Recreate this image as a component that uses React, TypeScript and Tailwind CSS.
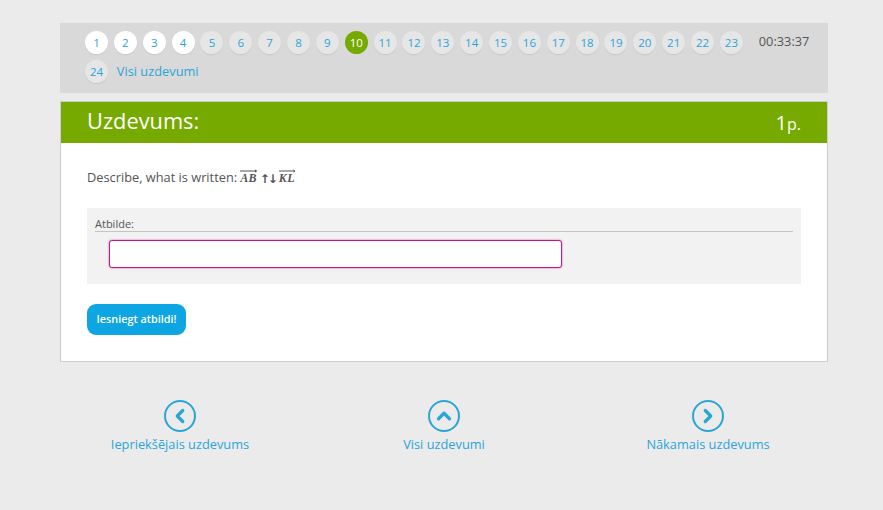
import { ChevronLeft, ChevronRight, ChevronUp } from 'lucide-react'

const numbers = Array.from({ length: 24 }, (_, i) => i + 1)

function Vec({ text }: { text: string }) {
  return (
    <span className="relative inline-block pt-[2px] font-['Liberation_Serif',serif] text-[12px] leading-[13px] font-bold italic tracking-[0.3px] text-[#555]">
      <svg className="absolute top-[-1px] left-0 h-[4px] w-full" viewBox="0 0 16 4" preserveAspectRatio="none">
        <path d="M0 2H16M14.5 1L16 2L14.5 3" fill="none" stroke="#555" strokeWidth="1" />
      </svg>
      {text}
    </span>
  )
}

function Bubble({ n }: { n: number }) {
  let tone = 'bg-[#e6e6e6] text-[#2aa5d8] shadow-[0_1px_1px_rgba(0,0,0,0.08)]'
  if (n < 5) tone = 'bg-white text-[#2aa5d8] shadow-[0_1px_1px_rgba(0,0,0,0.08)]'
  if (n === 10) tone = 'bg-[#76aa00] text-white'
  return (
    <a className={`mr-[5.87px] mb-[6px] flex h-[23px] w-[23px] shrink-0 items-center justify-center rounded-full text-[11.5px] ${tone}`}>
      {n}
    </a>
  )
}

function NavLink({ label, icon }: { label: string; icon: React.ReactNode }) {
  return (
    <a className="flex flex-col items-center text-[12.8px] leading-[18px] text-[#2aa5d8]">
      <span className="mb-[3px] flex h-[32px] w-[32px] items-center justify-center rounded-full border-2 border-[#2aa5d8]">
        {icon}
      </span>
      {label}
    </a>
  )
}

export default function App() {
  return (
    <div className="h-[510px] overflow-hidden bg-[#ebebeb] font-['Open_Sans',sans-serif]">
      <div className="ml-[60px] w-[768px] pt-[23px]">
        {/* Question numbers */}
        <div className="h-[70px] bg-[#d9d9d9] pt-[8px] pr-[17px] pl-[25px]">
          <div className="flex flex-wrap items-start">
            {numbers.slice(0, 23).map((n) => (
              <Bubble key={n} n={n} />
            ))}
            <span className="ml-[10px] text-[12.8px] leading-[20px] text-[#555]">00:33:37</span>
            <Bubble n={24} />
            <a className="ml-[3px] text-[12.8px] leading-[22px] text-[#2aa5d8]">Visi uzdevumi</a>
          </div>
        </div>

        {/* Task card */}
        <div className="mt-[8px] h-[261px] border border-[#cccccc] bg-white">
          <div className="flex h-[41px] items-center justify-between bg-[#76aa00] pr-[26px] pl-[26px] text-white">
            <h2 className="pb-[2px] text-[21.8px]">Uzdevums:</h2>
            <span className="text-[16px]">
              <span className="text-[20px]">1</span>p.
            </span>
          </div>
          <div className="px-[26px]">
            <p className="flex h-[65px] items-center gap-[3px] pt-[4px] text-[12.8px] text-[#555]">
              Describe, what is written: <Vec text="AB" />
              <span className="mt-[2px] font-['DejaVu_Sans',sans-serif] text-[12px] font-bold tracking-[-2px] text-[#555]">↑↓</span>
              <Vec text="KL" />
            </p>
            <div className="h-[76px] bg-[#f2f2f2] px-[8px] pt-[9px]">
              <div className="border-b border-[#c4c4c4] text-[11px] leading-[14px] text-[#555]">Atbilde:</div>
              <input className="mt-[8px] ml-[14px] block h-[28px] w-[453px] rounded-[3px] border border-[#c2148c] bg-white shadow-[0_0_2px_rgba(194,20,140,0.7)]" />
            </div>
            <button className="mt-[20px] h-[31px] w-[99px] rounded-[9px] bg-[#0ea5e3] text-[10.8px] font-semibold text-white">
              Iesniegt atbildi!
            </button>
          </div>
        </div>

        {/* Prev / all / next */}
        <div className="-mx-3 mt-[38px] grid grid-cols-3">
          <NavLink label="Iepriekšējais uzdevums" icon={<ChevronLeft size={22} strokeWidth={3.5} className="text-[#2aa5d8]" />} />
          <NavLink label="Visi uzdevumi" icon={<ChevronUp size={22} strokeWidth={3.5} className="text-[#2aa5d8]" />} />
          <NavLink label="Nākamais uzdevums" icon={<ChevronRight size={22} strokeWidth={3.5} className="text-[#2aa5d8]" />} />
        </div>
      </div>
    </div>
  )
}
